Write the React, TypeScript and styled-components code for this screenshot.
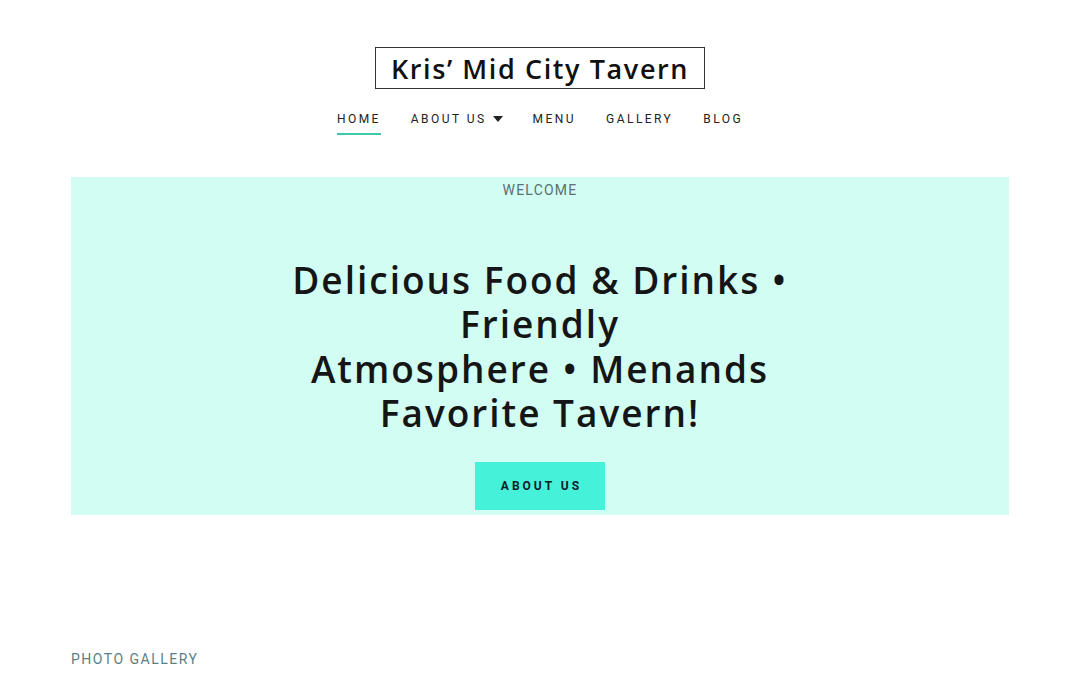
import React from "react";
import styled, { createGlobalStyle } from "styled-components";

const Global = createGlobalStyle`
  html, body { margin: 0; padding: 0; background: #ffffff; }
  body { font-family: Roboto, "Liberation Sans", sans-serif; }
  * { box-sizing: border-box; }
`;

const Page = styled.div`
  width: 1080px;
  min-height: 675px;
  display: flex;
  flex-direction: column;
  align-items: center;
`;

const Header = styled.header`
  display: flex;
  flex-direction: column;
  align-items: center;
  padding-top: 47px;
`;

const Logo = styled.div`
  border: 1px solid #333333;
  height: 42px;
  padding: 0 15px;
  display: flex;
  align-items: center;
  font-family: "Open Sans", "Noto Sans", sans-serif;
  font-weight: 600;
  font-size: 27px;
  letter-spacing: 1.6px;
  color: #111111;
`;

const Nav = styled.nav`
  display: flex;
  gap: 30px;
  margin-top: 22px;
  height: 24px;
`;

const NavItem = styled.a<{ $active?: boolean }>`
  font-family: Roboto, sans-serif;
  font-size: 12px;
  letter-spacing: 2.45px;
  color: #222222;
  text-decoration: none;
  display: flex;
  align-items: flex-start;
  gap: 6px;
  height: 24px;
  padding-top: 1px;
  border-bottom: 2px solid ${(p) => (p.$active ? "#3fc9ac" : "transparent")};
`;

const Caret = styled.svg`
  width: 10px;
  height: 6px;
  margin-top: 4px;
`;

const Hero = styled.section`
  margin-top: 42px;
  width: 938px;
  height: 338px;
  background: #d1fdf3;
  display: flex;
  flex-direction: column;
  align-items: center;
`;

const Eyebrow = styled.div`
  font-family: Roboto, sans-serif;
  font-size: 14px;
  letter-spacing: 1.2px;
  color: #5d6f70;
  margin-top: 5px;
`;

const Headline = styled.h1`
  margin: 60px 0 0;
  font-family: "Open Sans", "Noto Sans", sans-serif;
  font-weight: 600;
  font-size: 37px;
  line-height: 44.3px;
  letter-spacing: 2px;
  color: #151515;
  text-align: center;
`;

const Button = styled.a`
  margin-top: 27px;
  width: 130px;
  height: 48px;
  background: #46f1d9;
  display: flex;
  align-items: center;
  justify-content: center;
  font-family: Roboto, sans-serif;
  font-weight: 700;
  font-size: 12px;
  letter-spacing: 3px;
  color: #121a2a;
  text-decoration: none;
  padding-left: 3px;
`;

const Section = styled.section`
  width: 938px;
  margin-top: 136px;
`;

const SectionLabel = styled.div`
  font-family: Roboto, sans-serif;
  font-size: 14px;
  letter-spacing: 1.5px;
  color: #5b7f86;
`;

export default function App() {
  return (
    <>
      <Global />
      <Page>
        <Header>
          <Logo>Kris’ Mid City Tavern</Logo>
          <Nav>
            <NavItem $active>HOME</NavItem>
            <NavItem>
              ABOUT US
              <Caret viewBox="0 0 10 6">
                <path d="M0 0 H10 L5 6 Z" fill="#222" />
              </Caret>
            </NavItem>
            <NavItem>MENU</NavItem>
            <NavItem>GALLERY</NavItem>
            <NavItem>BLOG</NavItem>
          </Nav>
        </Header>
        <Hero>
          <Eyebrow>WELCOME</Eyebrow>
          <Headline>
            Delicious Food &amp; Drinks •<br />
            Friendly
            <br />
            Atmosphere • Menands
            <br />
            Favorite Tavern!
          </Headline>
          <Button>ABOUT US</Button>
        </Hero>
        <Section>
          <SectionLabel>PHOTO GALLERY</SectionLabel>
        </Section>
      </Page>
    </>
  );
}
